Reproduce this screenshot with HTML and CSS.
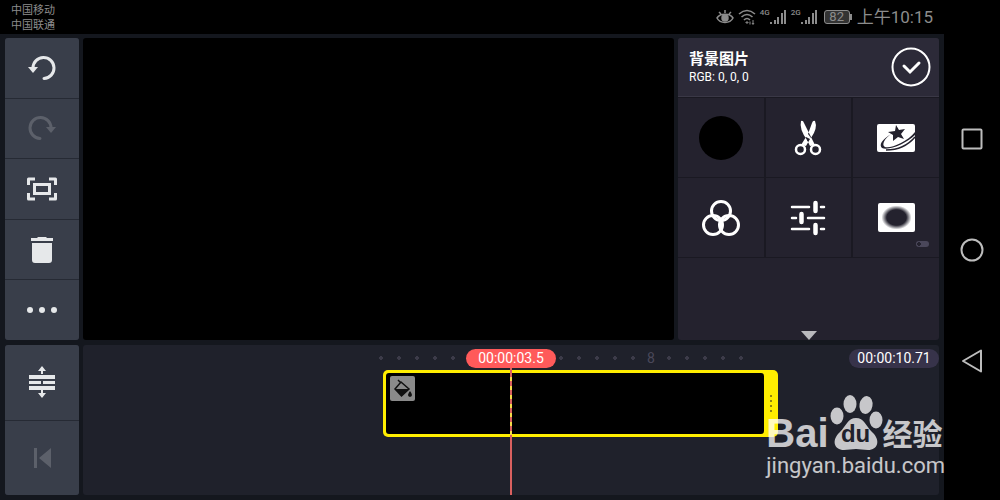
FILE: index.html
```html
<!DOCTYPE html>
<html lang="zh-CN">
<head>
  <meta charset="utf-8">
  <title>背景图片</title>
  <link rel="stylesheet" href="styles.css">
</head>
<body>
  <div class="screen">
    <header class="status">
      <div class="carriers">
        <div>中国移动</div>
        <div>中国联通</div>
      </div>
      <div class="indicators">
        <svg class="eye" width="18" height="16" viewBox="0 0 18 16" fill="none" stroke="currentColor" stroke-width="1.5">
          <path d="M1 9C4 4 14 4 17 9C14 15 4 15 1 9ZM9 1v3M3 3l2 2M15 3l-2 2"/>
          <circle cx="9" cy="9" r="3" fill="currentColor"/>
        </svg>
        <svg class="wifi" width="18" height="16" viewBox="0 0 18 16" fill="none" stroke="currentColor" stroke-width="1.6">
          <path d="M1 5Q9-2 17 5M3.500 8Q9 3 14.500 8M6 11Q9 8 12 11"/>
          <path d="M8 13h2v1H8zM12 12.500v3M15 15v-4M14 14l1 1.500 1-1.500" stroke-width="1"/>
        </svg>
        <span class="net">4G</span>
        <svg width="18" height="16" viewBox="0 0 18 16" fill="currentColor">
          <path d="M1 13h2v2H1zM5 11h2v4H5zM8 8h2v7H8zM12 4h2v11h-2zM15 1h2v14h-2z"/>
        </svg>
        <span class="net">2G</span>
        <svg width="18" height="16" viewBox="0 0 18 16" fill="currentColor">
          <path d="M1 13h2v2H1zM5 11h2v4H5zM8 8h2v7H8zM12 4h2v11h-2zM15 1h2v14h-2z"/>
        </svg>
        <span class="battery">82</span>
        <span class="clock">上午10:15</span>
      </div>
    </header>

    <main class="editor">
      <nav class="tools">
        <button type="button" aria-label="撤销">
          <svg width="28" height="26" viewBox="0 0 28 26">
            <path d="M5 13A10.500 10.500 0 1 1 16 23.500" fill="none" stroke="currentColor" stroke-width="3" stroke-linecap="round"/>
            <path d="M0 12h10l-5 6z" fill="currentColor"/>
          </svg>
        </button>
        <button type="button" aria-label="重做" disabled>
          <svg width="28" height="26" viewBox="0 0 28 26">
            <path d="M23 13A10.500 10.500 0 1 0 12 23.500" fill="none" stroke="currentColor" stroke-width="3" stroke-linecap="round"/>
            <path d="M28 12H18l5 6z" fill="currentColor"/>
          </svg>
        </button>
        <button type="button" aria-label="全屏">
          <svg width="30" height="24" viewBox="0 0 30 24" fill="none" stroke="currentColor" stroke-width="3" stroke-linejoin="round">
            <path d="M8 2H1.500v6M22 2h6.500v6M8 22H1.500v-6M22 22h6.500v-6"/>
            <path d="M7.500 7.500h15v9h-15z" stroke-linejoin="miter"/>
          </svg>
        </button>
        <button type="button" aria-label="删除">
          <svg width="24" height="28" viewBox="0 0 24 28" fill="currentColor">
            <path d="M1 2h6l1-1h8l1 1h6v3H1zM2 7h20v17q0 3-3 3H5q-3 0-3-3z"/>
          </svg>
        </button>
        <button type="button" aria-label="更多">
          <svg width="30" height="8" viewBox="0 0 30 8" fill="currentColor">
            <circle cx="3" cy="4" r="3"/><circle cx="15" cy="4" r="3"/><circle cx="27" cy="4" r="3"/>
          </svg>
        </button>
      </nav>

      <section class="preview"></section>

      <aside class="panel">
        <div class="panel-head">
          <div>
            <h1>背景图片</h1>
            <p>RGB: 0, 0, 0</p>
          </div>
          <button type="button" class="done" aria-label="完成">
            <svg width="40" height="40" viewBox="0 0 40 40" fill="none" stroke="#fff">
              <circle cx="20" cy="20" r="18.500" stroke-width="2"/>
              <path d="M13 19l6 6L28 16" stroke-width="3" stroke-linecap="round"/>
            </svg>
          </button>
        </div>
        <div class="options">
          <button type="button" aria-label="颜色"><span class="swatch"></span></button>
          <button type="button" aria-label="剪辑">
            <svg width="28" height="36" viewBox="0 0 28 36" fill="none" stroke="#fff">
              <circle cx="6.500" cy="29.500" r="4.500" stroke-width="2.500"/>
              <circle cx="21.500" cy="29.500" r="4.500" stroke-width="2.500"/>
              <path d="M7 1Q9 0 10 3L21 25l-5 1-3-6Q5 9 7 1zM21 1Q19 0 18 3l-4 11 3 4Q24 8 21 1zM12 17l-5 8 5 1 4-7z" fill="#fff" stroke="none"/>
              <circle cx="14" cy="20" r="1" fill="#24222e" stroke="none"/>
            </svg>
          </button>
          <button type="button" aria-label="特效">
            <svg width="40" height="30" viewBox="0 0 40 30">
              <rect x="1" y="1" width="38" height="28" rx="2" fill="#fff"/>
              <path d="M20 2l3 5 6-1-4 5 3 5-6-2-5 4v-6l-5-3 7-1z" fill="#24222e"/>
              <path d="M15 11Q1 20 6 25C13 28 31 20 39 12V9C31 19 14 26 9 24C5 22 9 15 15 11Z" fill="#24222e"/>
              <path d="M10 27Q28 27 39 14" fill="none" stroke="#24222e" stroke-width="1.500"/>
            </svg>
          </button>
          <button type="button" aria-label="滤镜">
            <svg width="40" height="38" viewBox="0 0 40 38" fill="none" stroke="#fff" stroke-width="3">
              <circle cx="20" cy="12" r="9.500"/><circle cx="12" cy="26" r="9.500"/><circle cx="28" cy="26" r="9.500"/>
            </svg>
          </button>
          <button type="button" aria-label="调整">
            <svg width="36" height="36" viewBox="0 0 36 36" fill="none" stroke="#fff" stroke-linecap="round">
              <path d="M2 7h17M31 7h3M2 18h4M18 18h16M2 29h17M31 29h3" stroke-width="2.500"/>
              <path d="M25.500 3v8M11.500 14v8M25.500 25v8" stroke-width="4.500"/>
            </svg>
          </button>
          <button type="button" aria-label="晕影">
            <span class="vignette"></span>
            <span class="toggle"></span>
          </button>
        </div>
        <div class="more">
          <svg width="16" height="9" viewBox="0 0 16 9"><path d="M0 0h16L8 9z" fill="#b9b9bd"/></svg>
        </div>
      </aside>

      <nav class="tools">
        <button type="button" aria-label="展开轨道">
          <svg width="28" height="32" viewBox="0 0 28 32" fill="currentColor">
            <path d="M1 9h26v4H1zM1 15h12v3H1zM15 15h12v3H15zM1 20h26v4H1z"/>
            <path d="M14 0l4 5h-3v3h-2V5h-3zM14 32l-4-5h3v-3h2v3h3z"/>
          </svg>
        </button>
        <button type="button" aria-label="回到开头" disabled>
          <svg width="18" height="20" viewBox="0 0 18 20" fill="currentColor"><path d="M1 0h3v20H1zM18 0v20L6 10z"/></svg>
        </button>
      </nav>

      <section class="timeline">
        <div class="ruler">
          <i></i><i></i><i></i><i></i><i></i><i></i><i></i><i></i><i></i><i></i><i></i><i></i><i></i><i></i><i></i>
          <span>8</span>
          <i></i><i></i><i></i><i></i><i></i>
        </div>
        <div class="track">
          <div class="clip">
            <div class="clip-body">
              <svg width="25" height="25" viewBox="0 0 25 25">
                <rect width="25" height="25" rx="2" fill="#8a8a8a"/>
                <path d="M8 4l2 2M11 6l8 7-7.500 7L5 13z" fill="none" stroke="#111" stroke-width="1.500"/>
                <path d="M5 13h14l-7.500 7zM20 15q4 5 0 6-4-1 0-6z" fill="#111"/>
              </svg>
            </div>
            <div class="handle"><b></b><b></b><b></b><b></b></div>
          </div>
        </div>
        <div class="playhead">
          <span class="now">00:00:03.5</span>
          <span class="needle"></span>
        </div>
        <span class="total">00:00:10.71</span>
      </section>
    </main>
  </div>

  <nav class="keys">
    <button type="button" aria-label="最近任务">
      <svg width="24" height="24" viewBox="0 0 24 24"><rect x="2.500" y="2.500" width="19" height="19" rx="1"/></svg>
    </button>
    <button type="button" aria-label="主页">
      <svg width="24" height="24" viewBox="0 0 24 24"><circle cx="12" cy="12" r="10.500"/></svg>
    </button>
    <button type="button" aria-label="返回">
      <svg width="24" height="24" viewBox="0 0 24 24"><path d="M21 1.500v21L3 12z" stroke-linejoin="round"/></svg>
    </button>
  </nav>

  <div class="watermark">
    <div class="brand">
      <span class="bai">Bai</span>
      <span class="paw">
        <svg width="54" height="58" viewBox="0 0 54 58" fill="currentColor">
          <ellipse cx="8" cy="22" rx="6.500" ry="8.500"/>
          <ellipse cx="21" cy="10" rx="6.500" ry="9"/>
          <ellipse cx="37" cy="11" rx="6.500" ry="9" transform="rotate(10 37 11)"/>
          <ellipse cx="47" cy="26" rx="6.500" ry="8.500"/>
          <path d="M27 24c8 0 10 8 16 14 9 8 6 18-4 18-5 0-8-1-12-1s-8 1-12 1C5 56 2 46 11 38c6-6 8-14 16-14z"/>
        </svg>
        <span class="du">du</span>
      </span>
      <span class="jingyan">经验</span>
    </div>
    <div class="site">jingyan.baidu.com</div>
  </div>
</body>
</html>
```
FILE: styles.css
```css
*{box-sizing:border-box}
body{margin:0;min-height:100vh;display:grid;grid-template-columns:1fr 56px;background:#000;color:#fff;font-family:Roboto,"Noto Sans CJK SC",sans-serif;position:relative}
button{border:none;padding:0;margin:0;background:none;color:inherit;font:inherit;display:flex;align-items:center;justify-content:center;cursor:pointer}
svg{display:block;flex:none}

.screen{display:flex;flex-direction:column}

/* status bar */
.status{height:34px;padding:0 11px;display:flex;justify-content:space-between;align-items:center;color:#8c8c8c}
.carriers{font-size:11px;line-height:15px;padding-top:1px}
.indicators{display:flex;align-items:center}
.wifi{margin-left:4px}
.net{width:9px;margin-left:4px;font-size:8px;line-height:12px;font-weight:500;align-self:flex-start}
.battery{position:relative;width:26px;height:14px;margin:0 7px 0 6px;border:1px solid #8c8c8c;border-radius:3px;background:#333;font-size:13px;line-height:12px;text-align:center}
.battery::after{content:"";position:absolute;right:-3px;top:3px;width:2px;height:6px;background:#8c8c8c}
.clock{font-size:17px;line-height:20px}

/* editor */
.editor{flex:1;display:grid;grid-template-columns:74px 1fr 261px;grid-template-rows:1fr 150px;gap:5px 4px;padding:4px 5px 5px;background:#14171e}
.tools{display:flex;flex-direction:column;gap:1px;background:#262a34;border-radius:3px;overflow:hidden}
.tools button{flex:1;background:#393e4a;color:#e6e8ea}
.tools button:disabled{color:#5c606a}
.preview{background:#000;border-radius:3px}

.panel{display:flex;flex-direction:column;background:#24222e;border-radius:3px;overflow:hidden}
.panel-head{height:59px;padding:0 8px 0 11px;display:flex;justify-content:space-between;align-items:center;background:#2c2a38;border-bottom:1px solid #3a3846}
h1{margin:0;font-size:15px;line-height:20px;font-weight:700}
.panel-head p{margin:0;font-size:12px;line-height:16px}
.options{display:grid;grid-template-columns:repeat(3,1fr);grid-auto-rows:79px;gap:1px 2px;padding:1px 0;background:#1a1922}
.options button{position:relative;background:#24222e}
.swatch{width:44px;height:44px;border-radius:50%;background:#000}
.vignette{width:37px;height:29px;border-radius:2px;background:radial-gradient(ellipse 15px 12px,#24222e 65%,#fff 100%)}
.toggle{position:absolute;right:10px;bottom:10px;width:13px;height:6px;border-radius:3px;background:radial-gradient(circle at 3px 3px,#24222e 2px,#4a475a 2px)}
.more{flex:1;display:flex;align-items:flex-end;justify-content:center}

/* timeline, centred on the playhead */
.timeline{grid-column:span 2;position:relative;background:#1f212b;border-radius:3px;overflow:hidden}
.ruler{height:25px;padding-left:calc(50% - 139px);display:flex;align-items:center}
.ruler i{flex:none;width:18px;height:4px;background:radial-gradient(circle,#3c3b49 2px,transparent 2px)}
.ruler span{width:18px;text-align:center;font-size:14px;color:#4a485a}
.track{padding-left:calc(50% - 128px)}
.clip{width:395px;height:67px;display:flex;padding:3px 0 3px 3px;background:#fe0;border-radius:5px}
.clip-body{flex:1;padding:3px 4px;background:#000;border-radius:3px}
.handle{width:14px;display:flex;flex-direction:column;align-items:center;justify-content:center;gap:3px}
.handle b{width:2px;height:2px;background:#8f8410}
.playhead{position:absolute;top:4px;bottom:0;left:50%;width:90px;margin-left:-45px;display:flex;flex-direction:column;align-items:center}
.now,.total{height:19px;border-radius:10px;font-size:14px;line-height:19px;text-align:center}
.now{width:90px;background:#ff5a5a}
.needle{flex:1;width:2px;background:repeating-linear-gradient(transparent 0 5px,#f5d94a 5px 9px) 0 4px/2px 63px no-repeat,#d9605f}
.total{position:absolute;top:4px;right:0;width:90px;background:#37334a}

/* system keys */
.keys{display:flex;flex-direction:column;align-items:center;justify-content:center;gap:87px}
.keys svg{fill:none;stroke:#bdbdbd;stroke-width:2}

.watermark{position:absolute;right:55px;bottom:20px;color:#fff;opacity:.75;pointer-events:none}
.brand{display:flex;align-items:flex-end;height:58px}
.bai{font:700 40px/38px "Liberation Sans",sans-serif}
.paw{position:relative}
.du{position:absolute;left:0;right:0;bottom:6px;text-align:center;color:#1f212b;font:700 24px/24px "Liberation Sans",sans-serif}
.jingyan{font-size:30px;line-height:34px;font-weight:700}
.site{font:22px/28px Roboto,sans-serif}
```
